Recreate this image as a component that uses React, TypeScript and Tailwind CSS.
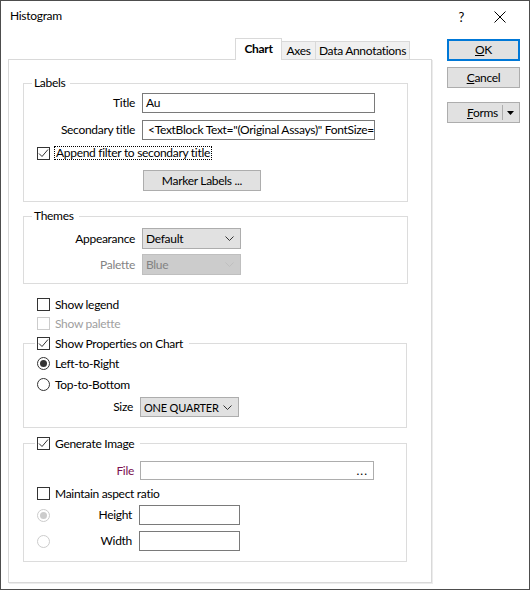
import React from "react";

const Check = ({ checked = false, disabled = false }: { checked?: boolean; disabled?: boolean }) => (
  <span
    className={
      "w-[13px] h-[13px] shrink-0 border bg-white flex items-center justify-center " +
      (disabled ? "border-[#cccccc]" : "border-[#333333]")
    }
  >
    {checked && (
      <svg width="11" height="11" viewBox="0 0 11 11">
        <path d="M1 5.5 L4 8.5 L10 1.5" fill="none" stroke="#333333" strokeWidth="1" />
      </svg>
    )}
  </span>
);

const Radio = ({ checked = false, disabled = false }: { checked?: boolean; disabled?: boolean }) => (
  <span
    className={
      "w-[13px] h-[13px] shrink-0 rounded-full border bg-white flex items-center justify-center " +
      (disabled ? "border-[#cccccc]" : "border-[#333333]")
    }
  >
    {checked && (
      <span className={"w-[7px] h-[7px] rounded-full " + (disabled ? "bg-[#cccccc]" : "bg-[#333333]")} />
    )}
  </span>
);

const Chevron = ({ color }: { color: string }) => (
  <svg width="9" height="5" viewBox="0 0 9 5" className="shrink-0">
    <path d="M0.5 0.5 L4.5 4.5 L8.5 0.5" fill="none" stroke={color} strokeWidth="1" />
  </svg>
);

const Select = ({
  value,
  w,
  disabled = false,
  h = "h-[21px]",
  textClass = "",
}: {
  value: string;
  w: string;
  disabled?: boolean;
  h?: string;
  textClass?: string;
}) => (
  <div
    className={
      `${w} ${h} border flex items-center justify-between pl-[3px] pr-[6px] whitespace-nowrap ` +
      (disabled ? "bg-[#cccccc] border-[#bfbfbf] text-[#838383]" : "bg-[#e1e1e1] border-[#adadad] text-black")
    }
  >
    <span className={"leading-none " + textClass}>{value}</span>
    <Chevron color={disabled ? "#bfbfbf" : "#333333"} />
  </div>
);

export default function App() {
  return (
    <div className="w-[530px] h-[590px] bg-white border border-[#4d4d4d] flex flex-col text-[12px] tracking-[-0.3px] text-black font-['Lato','Noto_Sans',sans-serif] overflow-hidden">
      {/* Title bar */}
      <div className="h-[37px] flex items-start pt-[7px] shrink-0">
        <span className="ml-[9px] leading-[16px]">Histogram</span>
        <span className="ml-auto leading-[16px] mt-[1px] text-[13px]">?</span>
        <span className="ml-[30px] mr-[23px] mt-[3px]">
          <svg width="12" height="12" viewBox="0 0 12 12">
            <path d="M0.5 0.5 L11.5 11.5 M11.5 0.5 L0.5 11.5" stroke="#000" strokeWidth="1" />
          </svg>
        </span>
      </div>

      {/* Body */}
      <div className="flex flex-1">
        {/* Tab control */}
        <div className="ml-[7px] w-[424px] flex flex-col">
          <div className="h-[21px] flex items-end justify-end pr-[22px] whitespace-nowrap">
            <div className="relative z-10 -mb-px h-[22px] w-[47px] border border-b-0 border-[#d9d9d9] bg-white flex items-center justify-center font-bold pb-[2px]">
              Chart
            </div>
            <div className="h-[18px] w-[34px] border-t border-r border-[#d9d9d9] bg-[#f0f0f0] flex items-center justify-center">
              Axes
            </div>
            <div className="h-[18px] w-[94px] border-t border-r border-[#d9d9d9] bg-[#f0f0f0] flex items-center justify-center">
              Data Annotations
            </div>
          </div>
          <div className="h-[524px] border border-[#d9d9d9] shadow-[1px_1px_0_#ececec] bg-white flex flex-col">
            {/* Labels */}
            <fieldset className="ml-[14px] mt-[15px] w-[385px] border border-[#dcdcdc] pb-[10px]">
              <legend className="ml-[8px] pl-[2px] pr-[5px] leading-[16px]">Labels</legend>
              <div className="flex flex-col pt-[2px]">
                <div className="flex items-center h-[20px]">
                  <span className="w-[111px] text-right whitespace-nowrap">Title</span>
                  <div className="ml-[7px] w-[233px] h-[20px] border border-[#7a7a7a] flex items-center pl-[3px]">Au</div>
                </div>
                <div className="flex items-center h-[20px] mt-[7px]">
                  <span className="w-[111px] text-right whitespace-nowrap">Secondary title</span>
                  <div className="ml-[7px] w-[233px] h-[20px] border border-[#7a7a7a] flex items-center pl-[5px] overflow-hidden whitespace-nowrap">
                    &lt;TextBlock Text="(Original Assays)" FontSize=
                  </div>
                </div>
                <div className="flex items-center h-[14px] mt-[6px] ml-[13px]">
                  <Check checked />
                  <span className="ml-[4px] h-[14px] flex items-center border border-dotted border-black px-[1px] leading-none whitespace-nowrap">
                    Append filter to secondary title
                  </span>
                </div>
                <div className="mt-[10px] ml-[119px] w-[118px] h-[21px] bg-[#e1e1e1] border border-[#adadad] flex items-center justify-center whitespace-nowrap">
                  Marker Labels ...
                </div>
              </div>
            </fieldset>

            {/* Themes */}
            <fieldset className="ml-[14px] mt-[6px] w-[385px] border border-[#dcdcdc] pb-[8px]">
              <legend className="ml-[8px] pl-[2px] pr-[5px] leading-[16px]">Themes</legend>
              <div className="flex flex-col pt-[4px]">
                <div className="flex items-center">
                  <span className="w-[111px] text-right">Appearance</span>
                  <div className="ml-[7px]">
                    <Select value="Default" w="w-[99px]" />
                  </div>
                </div>
                <div className="flex items-center mt-[5px]">
                  <span className="w-[111px] text-right text-[#838383]">Palette</span>
                  <div className="ml-[7px]">
                    <Select value="Blue" w="w-[99px]" disabled />
                  </div>
                </div>
              </div>
            </fieldset>

            {/* Checkboxes */}
            <div className="ml-[28px] mt-[14px] flex items-center h-[13px]">
              <Check />
              <span className="ml-[5px] leading-none">Show legend</span>
            </div>
            <div className="ml-[28px] mt-[6px] flex items-center h-[13px]">
              <Check disabled />
              <span className="ml-[5px] leading-none text-[#a0a0a0]">Show palette</span>
            </div>

            {/* Show Properties */}
            <fieldset className="ml-[14px] mt-[7px] w-[384px] border border-[#dcdcdc] pb-[10px]">
              <legend className="ml-[11px] pl-[2px] pr-[6px] h-[13px] flex items-center">
                <Check checked />
                <span className="ml-[5px] leading-none whitespace-nowrap">Show Properties on Chart</span>
              </legend>
              <div className="flex flex-col pt-[7px]">
                <div className="ml-[13px] flex items-center h-[13px]">
                  <Radio checked />
                  <span className="ml-[5px] leading-none">Left-to-Right</span>
                </div>
                <div className="ml-[13px] mt-[8px] flex items-center h-[13px]">
                  <Radio />
                  <span className="ml-[5px] leading-none">Top-to-Bottom</span>
                </div>
                <div className="mt-[6px] flex items-center">
                  <span className="w-[109px] text-right">Size</span>
                  <div className="ml-[7px]">
                    <Select value="ONE QUARTER" w="w-[99px]" h="h-[20px]" textClass="text-[11px] tracking-[-0.2px]" />
                  </div>
                </div>
              </div>
            </fieldset>

            {/* Generate Image */}
            <fieldset className="ml-[14px] mt-[9px] w-[384px] border border-[#dcdcdc] pb-[10px]">
              <legend className="ml-[11px] pl-[2px] pr-[6px] h-[13px] flex items-center">
                <Check checked />
                <span className="ml-[5px] leading-none whitespace-nowrap">Generate Image</span>
              </legend>
              <div className="flex flex-col pt-[11px]">
                <div className="flex items-center h-[19px]">
                  <span className="w-[110px] text-right text-[#7a1050]">File</span>
                  <div className="ml-[6px] w-[234px] h-[19px] border border-[#adadad] flex items-center justify-end pr-[5px]">
                    <span className="leading-none tracking-[1px]">...</span>
                  </div>
                </div>
                <div className="ml-[13px] mt-[7px] flex items-center h-[13px]">
                  <Check />
                  <span className="ml-[5px] leading-none whitespace-nowrap">Maintain aspect ratio</span>
                </div>
                <div className="mt-[5px] flex items-center h-[20px]">
                  <span className="ml-[13px]">
                    <Radio checked disabled />
                  </span>
                  <span className="w-[82px] text-right">Height</span>
                  <div className="ml-[7px] w-[101px] h-[20px] border border-[#7a7a7a]" />
                </div>
                <div className="mt-[6px] flex items-center h-[20px]">
                  <span className="ml-[13px]">
                    <Radio disabled />
                  </span>
                  <span className="w-[82px] text-right">Width</span>
                  <div className="ml-[7px] w-[101px] h-[20px] border border-[#7a7a7a]" />
                </div>
              </div>
            </fieldset>
          </div>
        </div>

        {/* Buttons */}
        <div className="ml-[15px] flex flex-col pt-[1px]">
          <div className="w-[73px] h-[22px] bg-[#e1e1e1] border-2 border-[#0078d7] flex items-center justify-center">
            <span><span className="underline">O</span>K</span>
          </div>
          <div className="mt-[6px] w-[73px] h-[21px] bg-[#e1e1e1] border border-[#adadad] flex items-center justify-center">
            <span><span className="underline">C</span>ancel</span>
          </div>
          <div className="mt-[14px] w-[73px] h-[21px] bg-[#e1e1e1] border border-[#adadad] flex items-center">
            <span className="ml-auto"><span className="underline">F</span>orms</span>
            <span className="ml-[4px] w-px h-[15px] bg-[#adadad]" />
            <span className="ml-[4px] mr-[5px]">
              <svg width="7" height="4" viewBox="0 0 7 4">
                <path d="M0 0 L7 0 L3.5 4 Z" fill="#000" />
              </svg>
            </span>
          </div>
        </div>
      </div>
    </div>
  );
}
